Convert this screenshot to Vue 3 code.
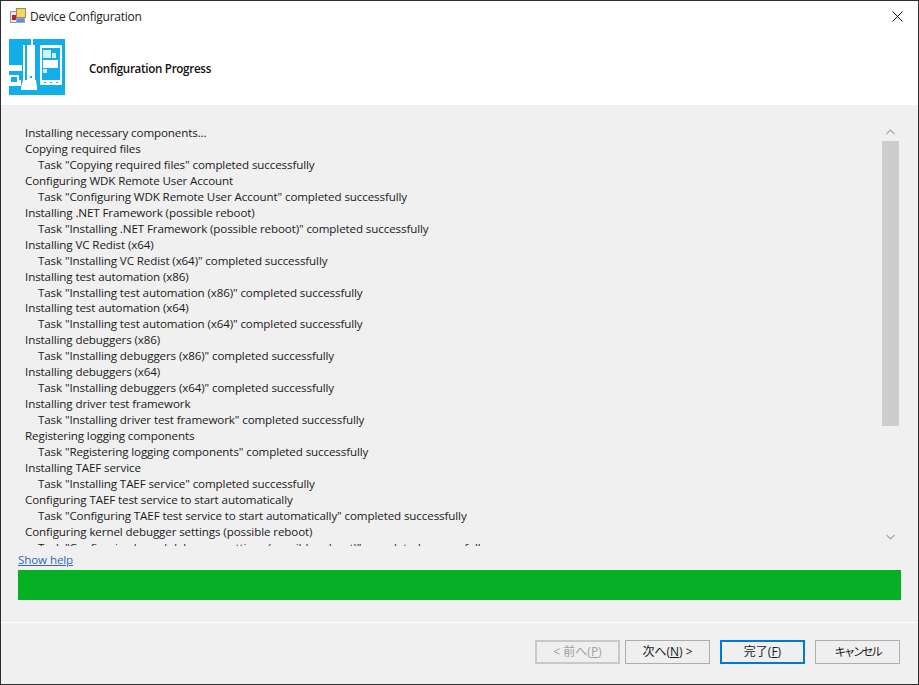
<script setup>
const lines = [
  ['Installing necessary components...', 0],
  ['Copying required files', 0],
  ['Task "Copying required files" completed successfully', 1],
  ['Configuring WDK Remote User Account', 0],
  ['Task "Configuring WDK Remote User Account" completed successfully', 1],
  ['Installing .NET Framework (possible reboot)', 0],
  ['Task "Installing .NET Framework (possible reboot)" completed successfully', 1],
  ['Installing VC Redist (x64)', 0],
  ['Task "Installing VC Redist (x64)" completed successfully', 1],
  ['Installing test automation (x86)', 0],
  ['Task "Installing test automation (x86)" completed successfully', 1],
  ['Installing test automation (x64)', 0],
  ['Task "Installing test automation (x64)" completed successfully', 1],
  ['Installing debuggers (x86)', 0],
  ['Task "Installing debuggers (x86)" completed successfully', 1],
  ['Installing debuggers (x64)', 0],
  ['Task "Installing debuggers (x64)" completed successfully', 1],
  ['Installing driver test framework', 0],
  ['Task "Installing driver test framework" completed successfully', 1],
  ['Registering logging components', 0],
  ['Task "Registering logging components" completed successfully', 1],
  ['Installing TAEF service', 0],
  ['Task "Installing TAEF service" completed successfully', 1],
  ['Configuring TAEF test service to start automatically', 0],
  ['Task "Configuring TAEF test service to start automatically" completed successfully', 1],
  ['Configuring kernel debugger settings (possible reboot)', 0],
  ['Task "Configuring kernel debugger settings (possible reboot)" completed successfully', 1],
]
</script>

<template>
  <div class="window">
    <div class="titlebar">
      <svg class="appicon" width="16" height="16" viewBox="0 0 16 16">
        <rect x="0.5" y="3.5" width="7" height="11" fill="#e8e8e8" stroke="#9a9a9a" />
        <rect x="2" y="7" width="4" height="5" fill="#b3282d" />
        <rect x="6.5" y="0.5" width="9" height="9" fill="#f4d466" stroke="#a08a50" />
        <rect x="6.5" y="10.5" width="8" height="4" fill="#5f8fd8" stroke="#8fa8d0" />
      </svg>
      <span class="title">Device Configuration</span>
      <svg class="close" width="11" height="11" viewBox="0 0 11 11">
        <path d="M0.5 0.5 L10.5 10.5 M10.5 0.5 L0.5 10.5" stroke="#111" stroke-width="1" fill="none" />
      </svg>
    </div>
    <div class="header">
      <svg class="logo" width="56" height="56" viewBox="0 0 56 56">
        <rect width="56" height="56" fill="#12aee8" />
        <rect x="0" y="26" width="13" height="6" fill="#fff" />
        <rect x="22" y="0" width="2" height="6" fill="#fff" />
        <rect x="14" y="6" width="2" height="35" fill="#fff" />
        <rect x="18" y="6" width="8" height="35" fill="#fff" />
        <rect x="21" y="37" width="2" height="2" fill="#12aee8" />
        <path d="M14 41h13l1 7v3H12v-3z" fill="#fff" />
        <path d="M0 36h10v5h2v6H0z" fill="#fff" />
        <rect x="2" y="38" width="6" height="5" fill="#12aee8" />
        <rect x="31" y="6" width="22" height="40" rx="1" fill="#fff" />
        <rect x="33" y="9" width="18" height="32" fill="#12aee8" />
        <rect x="34" y="11" width="8" height="8" fill="#d4effb" />
        <rect x="43" y="14" width="4" height="5" fill="#d4effb" />
        <rect x="34" y="21" width="15" height="8" fill="#fff" />
        <rect x="34" y="30" width="4" height="4" fill="#d4effb" />
        <rect x="35" y="43" width="2" height="1" fill="#12aee8" />
        <rect x="41" y="43" width="2" height="1" fill="#12aee8" />
        <rect x="47" y="43" width="2" height="1" fill="#12aee8" />
      </svg>
      <span class="heading">Configuration Progress</span>
    </div>
    <div class="body">
      <div class="logrow">
        <div class="log">
          <div v-for="(l, i) in lines" :key="i" class="line" :class="{ task: l[1] }">{{ l[0] }}</div>
        </div>
        <div class="scrollbar">
          <svg width="9" height="6" viewBox="0 0 9 6"><path d="M0.5 5 L4.5 1 L8.5 5" stroke="#a6a6a6" stroke-width="1.2" fill="none" /></svg>
          <div class="track"><div class="thumb"></div></div>
          <svg width="9" height="6" viewBox="0 0 9 6"><path d="M0.5 1 L4.5 5 L8.5 1" stroke="#a6a6a6" stroke-width="1.2" fill="none" /></svg>
        </div>
      </div>
      <a class="help">Show help</a>
      <div class="progress"></div>
    </div>
    <div class="footer">
      <button class="btn disabled">&lt; 前へ(<u>P</u>)</button>
      <button class="btn">次へ(<u>N</u>) &gt;</button>
      <button class="btn primary">完了(<u>F</u>)</button>
      <button class="btn cancel">キャンセル</button>
    </div>
  </div>
</template>

<style>
html, body { margin: 0; padding: 0; background: #f0f0f0; }
</style>

<style scoped>
.window {
  width: 919px;
  height: 685px;
  box-sizing: border-box;
  border: 1px solid #2e2e2e;
  display: flex;
  flex-direction: column;
  background: #f0f0f0;
  font-family: "Open Sans", "Noto Sans CJK JP", sans-serif;
  font-size: 11.6px;
  letter-spacing: -0.11px;
  color: #1a1a1a;
  overflow: hidden;
}
.titlebar {
  height: 30px;
  background: #fff;
  display: flex;
  align-items: center;
  padding: 0 15px 0 9px;
  flex: none;
}
.appicon { margin-right: 4px; }
.title { font-size: 12px; letter-spacing: -0.25px; flex: 1; color: #222; }
.header {
  height: 74px;
  flex: none;
  background: #fff;
  display: flex;
  align-items: flex-start;
  padding-left: 8px;
}
.logo { margin-top: 8px; }
.heading {
  margin-left: 24px;
  margin-top: 29px;
  font-weight: 600;
  font-size: 11.6px;
  letter-spacing: -0.3px;
  line-height: 18px;
  color: #111;
}
.body {
  flex: none;
  height: 518px;
  padding: 0 17px;
  display: flex;
  flex-direction: column;
  border-bottom: 1px solid #fff;
  box-sizing: border-box;
}
.logrow {
  height: 421px;
  margin-top: 20px;
  display: flex;
  flex: none;
}
.log { flex: 1; overflow: hidden; padding: 0 0 0 7px; }
.line { height: 15.96px; line-height: 15.96px; white-space: nowrap; }
.task { padding-left: 13px; }
.scrollbar {
  width: 17px;
  margin-right: 2px;
  display: flex;
  flex-direction: column;
  align-items: center;
  justify-content: space-between;
  padding-top: 4px;
  padding-bottom: 6px;
  box-sizing: border-box;
}
.track { flex: 1; width: 17px; margin-top: 6px; }
.thumb { height: 285px; background: #cdcdcd; }
.help {
  margin-top: 5px;
  height: 17px;
  line-height: 17px;
  color: #2f66bf;
  text-decoration: underline;
}
.progress {
  height: 30px;
  margin-top: 2px;
  background: #06b025;
}
.footer {
  flex: 1;
  display: flex;
  justify-content: flex-end;
  align-items: flex-start;
  gap: 10px;
  padding: 17px 18px 0 0;
  box-sizing: border-box;
}
.btn {
  width: 85px;
  height: 24px;
  box-sizing: border-box;
  border: 1px solid #adadad;
  background: #efefef;
  font-family: "Open Sans", "Noto Sans CJK JP", sans-serif;
  font-size: 12px;
  color: #1a1a1a;
  padding: 0;
  line-height: 20px;
}
.disabled {
  border: 2px solid #c9c9c9;
  color: #a0a0a0;
  line-height: 18px;
  margin-right: -5px;
}
.primary { border: 2px solid #0078d7; line-height: 18px; }
.cancel { font-size: 11.5px; letter-spacing: -2.3px; }
</style>
